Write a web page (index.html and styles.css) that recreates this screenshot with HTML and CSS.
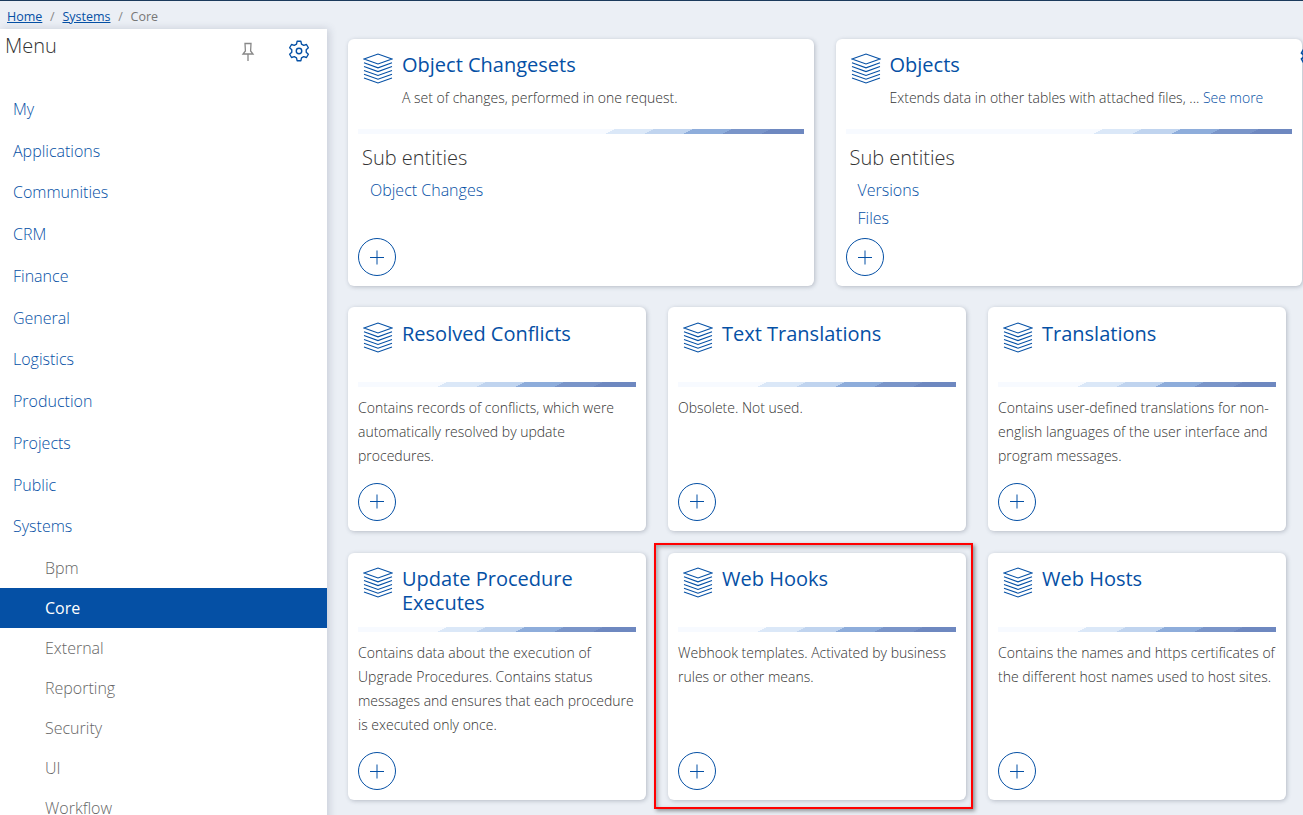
FILE: index.html
```html
<!DOCTYPE html>
<html lang="en">
<head>
<meta charset="UTF-8" />
<meta name="viewport" content="width=device-width, initial-scale=1" />
<title>Core</title>
<link rel="stylesheet" href="styles.css">
</head>
<body>
<svg class="sprites" xmlns="http://www.w3.org/2000/svg">
  <symbol id="layers" viewBox="0 0 30 31">
    <path d="M1 6 15 1l14 5-14 5zM1 9.800l14 5 14-5M1 13.600l14 5 14-5M1 17.400l14 5 14-5M1 21.200l14 5 14-5M1 25l14 5 14-5" />
  </symbol>
  <symbol id="gear" viewBox="0 0 24 24">
    <path d="M9.26 4.48 9.94 1.4h4.12l.68 3.08 2.4 1.39 3.01-.95 2.06 3.56-2.33 2.13v2.78l2.33 2.13-2.06 3.56-3.01-.95-2.4 1.39-.68 3.08H9.94l-.68-3.08-2.4-1.39-3.01.95-2.06-3.56 2.33-2.13v-2.78L1.79 8.48l2.06-3.56 3.01.95z" />
    <circle cx="12" cy="12" r="3" />
  </symbol>
</svg>

<nav class="crumbs">
  <a href="#">Home</a><span class="sep">/</span><a href="#">Systems</a><span class="sep">/</span><span>Core</span>
</nav>

<div class="layout">
  <aside class="sidebar">
    <div class="side-head">
      <span class="side-title">Menu</span>
      <svg class="pin" viewBox="0 0 14 20"><path d="M4 1.500h6l-.4 7.500 2.400 3H2l2.400-3zM7 12v7" /></svg>
      <svg class="side-gear"><use href="#gear" /></svg>
    </div>
    <ul class="menu">
      <li><a href="#">My</a></li>
      <li><a href="#">Applications</a></li>
      <li><a href="#">Communities</a></li>
      <li><a href="#">CRM</a></li>
      <li><a href="#">Finance</a></li>
      <li><a href="#">General</a></li>
      <li><a href="#">Logistics</a></li>
      <li><a href="#">Production</a></li>
      <li><a href="#">Projects</a></li>
      <li><a href="#">Public</a></li>
      <li><a href="#">Systems</a></li>
    </ul>
    <ul class="submenu">
      <li><a href="#">Bpm</a></li>
      <li class="active"><a href="#">Core</a></li>
      <li><a href="#">External</a></li>
      <li><a href="#">Reporting</a></li>
      <li><a href="#">Security</a></li>
      <li><a href="#">UI</a></li>
      <li><a href="#">Workflow</a></li>
    </ul>
  </aside>

  <main class="content">
    <div class="row top">
      <section class="card wide">
        <header class="card-head tall">
          <svg class="layers"><use href="#layers" /></svg>
          <div>
            <h2>Object Changesets</h2>
            <p class="lead">A set of changes, performed in one request.</p>
          </div>
        </header>
        <div class="bar"></div>
        <h3>Sub entities</h3>
        <a class="sub-link" href="#">Object Changes</a>
        <a class="add" href="#"></a>
      </section>
      <section class="card wide">
        <svg class="edge-gear"><use href="#gear" /></svg>
        <header class="card-head tall">
          <svg class="layers"><use href="#layers" /></svg>
          <div>
            <h2>Objects</h2>
            <p class="lead">Extends data in other tables with attached files, ... <a href="#">See more</a></p>
          </div>
        </header>
        <div class="bar"></div>
        <h3>Sub entities</h3>
        <a class="sub-link" href="#">Versions</a>
        <a class="sub-link" href="#">Files</a>
        <a class="add" href="#"></a>
      </section>
    </div>

    <div class="row">
      <section class="card">
        <header class="card-head">
          <svg class="layers"><use href="#layers" /></svg>
          <h2>Resolved Conflicts</h2>
        </header>
        <div class="bar"></div>
        <p class="desc">Contains records of conflicts, which were automatically resolved by update procedures.</p>
        <a class="add" href="#"></a>
      </section>
      <section class="card">
        <header class="card-head">
          <svg class="layers"><use href="#layers" /></svg>
          <h2>Text Translations</h2>
        </header>
        <div class="bar"></div>
        <p class="desc">Obsolete. Not used.</p>
        <a class="add" href="#"></a>
      </section>
      <section class="card">
        <header class="card-head">
          <svg class="layers"><use href="#layers" /></svg>
          <h2>Translations</h2>
        </header>
        <div class="bar"></div>
        <p class="desc">Contains user-defined translations for non-english languages of the user interface and program messages.</p>
        <a class="add" href="#"></a>
      </section>
    </div>

    <div class="row">
      <section class="card">
        <header class="card-head">
          <svg class="layers"><use href="#layers" /></svg>
          <h2>Update Procedure Executes</h2>
        </header>
        <div class="bar"></div>
        <p class="desc">Contains data about the execution of Upgrade Procedures. Contains status messages and ensures that each procedure is executed only once.</p>
        <a class="add" href="#"></a>
      </section>
      <section class="card marked">
        <header class="card-head">
          <svg class="layers"><use href="#layers" /></svg>
          <h2>Web Hooks</h2>
        </header>
        <div class="bar"></div>
        <p class="desc">Webhook templates. Activated by business rules or other means.</p>
        <a class="add" href="#"></a>
      </section>
      <section class="card">
        <header class="card-head">
          <svg class="layers"><use href="#layers" /></svg>
          <h2>Web Hosts</h2>
        </header>
        <div class="bar"></div>
        <p class="desc">Contains the names and https certificates of the different host names used to host sites.</p>
        <a class="add" href="#"></a>
      </section>
    </div>
  </main>
</div>
</body>
</html>
```

FILE: styles.css
```css
* {
  box-sizing: border-box;
}
html, body {
  height: 100%;
}
body {
  margin: 0;
  overflow: hidden;
  background: #ebeff5;
  border-top: 1px solid #1b3a5c;
  color: #333;
  font-family: "Open Sans", sans-serif;
  font-weight: 300;
}
a {
  color: #0550a5;
  text-decoration: none;
}
h2, h3, p, ul {
  margin: 0;
  padding: 0;
}
ul {
  list-style: none;
}
.sprites {
  display: none;
}

.crumbs {
  display: flex;
  align-items: center;
  height: 28px;
  padding: 2px 0 0 7px;
  font-size: 12.5px;
  font-weight: 400;
  color: #777;
}
.crumbs a {
  text-decoration: underline;
}
.crumbs .sep {
  margin: 0 7.75px;
  color: #888;
}

.layout {
  display: flex;
  align-items: flex-start;
}
.sidebar {
  flex: none;
  width: 327px;
  height: 800px;
  background: #fff;
  box-shadow: 2px 0 8px rgba(60, 70, 100, 0.2);
}
.side-head {
  display: flex;
  align-items: flex-start;
  height: 59.75px;
  padding: 3px 17px 0 5px;
}
.side-title {
  flex: 1;
  font-size: 20px;
  line-height: 27px;
  color: #333;
}
.pin {
  width: 14px;
  height: 20px;
  margin: 10px 33px 0 0;
  fill: none;
  stroke: #888;
  stroke-width: 1.3;
}
.side-gear {
  width: 22px;
  height: 22px;
  margin-top: 8px;
  fill: none;
  stroke: #0550a5;
  stroke-width: 1.5;
  stroke-linejoin: round;
}
.menu li {
  height: 41.75px;
  padding-left: 13px;
  font-size: 16px;
  line-height: 41.75px;
}
.submenu li {
  height: 40px;
  padding-left: 45px;
  font-size: 16px;
  line-height: 40px;
}
.submenu a {
  color: #666;
}
.submenu .active {
  background: #0550a5;
}
.submenu .active a {
  color: #fff;
  font-weight: 400;
}

.content {
  flex: 1;
  padding: 10px 0 0 21px;
}
.row {
  display: flex;
  gap: 22px;
  margin-bottom: 22px;
}
.row.top {
  gap: 21.5px;
  margin-bottom: 21px;
}
.card {
  position: relative;
  display: flex;
  flex-direction: column;
  width: 298px;
  padding: 0 10px 10px;
  background: #fff;
  border-radius: 6px;
  box-shadow: 1px 1px 4px rgba(60, 70, 90, 0.3);
}
.card.wide {
  width: 466px;
  min-height: 247px;
}
.card-head {
  display: flex;
  gap: 9px;
  height: 74.5px;
  padding: 14.5px 0 0 5px;
}
.card-head.tall {
  height: 90px;
  padding-top: 14px;
}
.layers {
  flex: none;
  width: 30px;
  height: 31px;
  fill: none;
  stroke: #0550a5;
  stroke-width: 1.1;
}
.card-head h2 {
  font-size: 20px;
  font-weight: 400;
  line-height: 24px;
  color: #0550a5;
}
.lead {
  margin-top: 9px;
  font-size: 14px;
  line-height: 24px;
}
.bar {
  display: flex;
  justify-content: flex-end;
  height: 5px;
  flex: none;
  background: #f7faff;
}
.bar::after {
  content: "";
  width: 199px;
  background: linear-gradient(153.4deg,
    #f7faff 0 4.8%, #dbe8f8 4.8% 23.5%, #c0d4ef 23.5% 42.2%, #8eaddb 42.2% 60.9%, #7a95c9 60.9% 79.6%, #6e88c0 79.6%);
}
.card h3 {
  margin: 10px 0 4px 4px;
  font-size: 20px;
  font-weight: 300;
  line-height: 28px;
  color: #333;
}
.sub-link {
  margin-left: 12px;
  font-size: 16px;
  line-height: 28px;
}
.desc {
  margin: 9.25px 0 14.75px;
  font-size: 14px;
  line-height: 24px;
  color: #333;
}
.add {
  position: relative;
  flex: none;
  width: 38px;
  height: 38px;
  margin-top: auto;
  border: 1px solid #0550a5;
  border-radius: 50%;
}
.add::before, .add::after {
  content: "";
  position: absolute;
  left: 11px;
  top: 17.500px;
  width: 14px;
  height: 1px;
  background: #0550a5;
}
.add::after {
  transform: rotate(90deg);
}
.edge-gear {
  position: absolute;
  left: 464.5px;
  top: 7px;
  width: 20px;
  height: 20px;
  fill: none;
  stroke: #0550a5;
  stroke-width: 2;
}

/* red box drawn over the screenshot */
.marked::after {
  content: "";
  position: absolute;
  inset: -10px -7px -9px -14px;
  border: 2px solid #f00;
  box-shadow: 2px 2px 4px rgba(0, 0, 0, 0.4), inset 2px 2px 4px rgba(0, 0, 0, 0.3);
  pointer-events: none;
}
```
